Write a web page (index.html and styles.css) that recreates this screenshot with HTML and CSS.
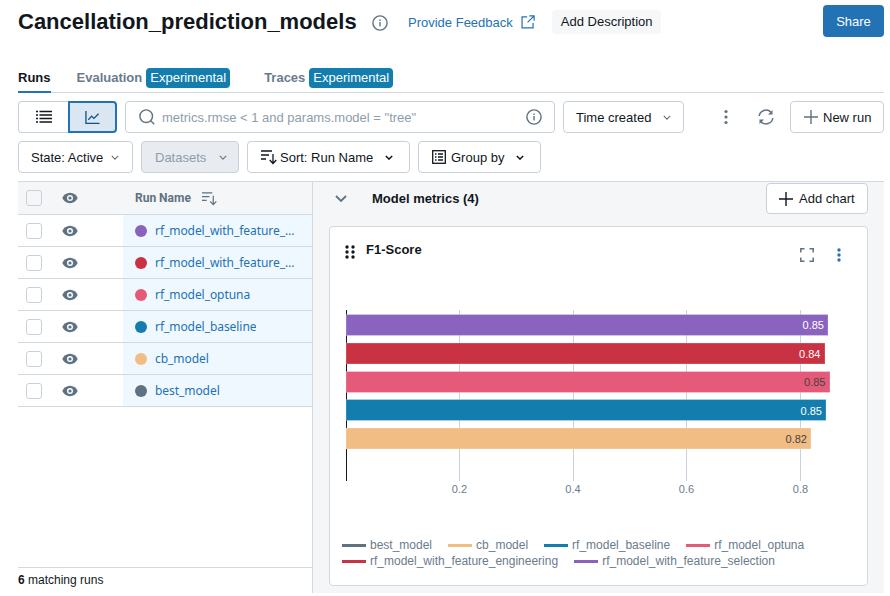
FILE: index.html
```html
<!DOCTYPE html>
<html lang="en">
<head>
<meta charset="utf-8">
<title>Cancellation_prediction_models</title>
<link rel="stylesheet" href="styles.css">
</head>
<body>
<div class="page">
  <header class="head">
    <h1 class="title">Cancellation_prediction_models</h1>
    <svg class="ico info-h" viewBox="0 0 16 16"><circle cx="8" cy="8" r="7.1" fill="none" stroke="#5f7281" stroke-width="1.4"/><rect x="7.3" y="7" width="1.4" height="4.4" fill="#5f7281"/><rect x="7.3" y="4.5" width="1.4" height="1.5" fill="#5f7281"/></svg>
    <a class="feedback">Provide Feedback</a>
    <svg class="ico ext" viewBox="0 0 16 16"><path d="M7 2.2H1.2v12.6h12.6V9" fill="none" stroke="#2272b4" stroke-width="1.4"/><path d="M9.5 1h5.5v5.5M15 1 7.5 8.5" fill="none" stroke="#2272b4" stroke-width="1.4"/></svg>
    <span class="add-desc">Add Description</span>
    <button class="share">Share</button>
  </header>

  <nav class="tabs">
    <span class="tab active">Runs</span>
    <span class="tab">Evaluation</span><span class="badge">Experimental</span>
    <span class="tab tab-traces">Traces</span><span class="badge">Experimental</span>
  </nav>

  <div class="bar bar-one">
    <div class="toggle">
      <span class="tog tog-list">
        <svg class="ico i16" viewBox="0 0 16 16"><path d="M3.5 2.5H16M3.5 6H16M3.500 9.500H16M3.500 13H16" stroke="#11171c" stroke-width="1.3"/><path d="M0 2.500H2M0 6H2M0 9.500H2M0 13H2" stroke="#11171c" stroke-width="1.3"/></svg>
      </span>
      <span class="tog tog-chart">
        <svg class="ico i15" viewBox="0 0 16 16"><path d="M1 1v13.300h14.500" fill="none" stroke="#0e538b" stroke-width="1.4"/><path d="M3.500 10.500 7 6.500l2.500 2.500 5-5" fill="none" stroke="#0e538b" stroke-width="1.4"/></svg>
      </span>
    </div>
    <div class="search">
      <svg class="ico search-i" viewBox="0 0 16 16"><circle cx="7.200" cy="7.200" r="6.300" fill="none" stroke="#5f7281" stroke-width="1.4"/><path d="m11.800 11.800 3.400 3.400" stroke="#5f7281" stroke-width="1.4"/></svg>
      <span class="placeholder">metrics.rmse &lt; 1 and params.model = "tree"</span>
      <svg class="ico search-info" viewBox="0 0 16 16"><circle cx="8" cy="8" r="7.100" fill="none" stroke="#5f7281" stroke-width="1.4"/><rect x="7.300" y="7" width="1.400" height="4.400" fill="#5f7281"/><rect x="7.300" y="4.500" width="1.400" height="1.500" fill="#5f7281"/></svg>
    </div>
    <button class="btn time">Time created<svg class="chev" viewBox="0 0 10 6"><path d="M1 1l4 4 4-4" fill="none" stroke="#5f7281" stroke-width="1.4"/></svg></button>
    <svg class="ico kebab" viewBox="0 0 4 16"><circle cx="2" cy="2.500" r="1.600" fill="#5f7281"/><circle cx="2" cy="8" r="1.600" fill="#5f7281"/><circle cx="2" cy="13.500" r="1.600" fill="#5f7281"/></svg>
    <svg class="ico refresh" viewBox="0 0 16 16"><path d="M1.200 7A6.900 6.900 0 0 1 13 3.200M14.800 9A6.900 6.900 0 0 1 3 12.800" fill="none" stroke="#5f7281" stroke-width="1.500"/><path d="M14.500 1v4.500H10zM1.500 15v-4.500H6z" fill="#5f7281"/></svg>
    <button class="btn newrun"><svg class="plus" viewBox="0 0 14 14"><path d="M7 0v14M0 7h14" stroke="#5f7281" stroke-width="1.400"/></svg>New run</button>
  </div>

  <div class="bar bar-two">
    <button class="btn state">State: Active<svg class="chev" viewBox="0 0 10 6"><path d="M1 1l4 4 4-4" fill="none" stroke="#5f7281" stroke-width="1.4"/></svg></button>
    <button class="btn datasets">Datasets<svg class="chev" viewBox="0 0 10 6"><path d="M1 1l4 4 4-4" fill="none" stroke="#6b7b8c" stroke-width="1.600"/></svg></button>
    <button class="btn sort"><svg class="ico i16 sort-i" viewBox="0 0 16 16"><path d="M0 2h11M0 6h8M0 10h5" stroke="#11171c" stroke-width="1.3"/><path d="M12 5v9.500M8.700 11l3.300 3.500 3.300-3.500" fill="none" stroke="#11171c" stroke-width="1.3"/></svg>Sort: Run Name<svg class="chev" viewBox="0 0 10 6"><path d="M1 1l4 4 4-4" fill="none" stroke="#11171c" stroke-width="1.800"/></svg></button>
    <button class="btn group"><svg class="ico i14" viewBox="0 0 14 14"><rect x=".7" y=".7" width="12.600" height="12.600" fill="none" stroke="#11171c" stroke-width="1.3"/><path d="M3 4h1.500M3 7h1.500M3 10h1.500M6 4h5M6 7h5M6 10h5" stroke="#11171c" stroke-width="1.3"/></svg>Group by<svg class="chev" viewBox="0 0 10 6"><path d="M1 1l4 4 4-4" fill="none" stroke="#11171c" stroke-width="1.800"/></svg></button>
  </div>

  <main class="main">
    <section class="runs">
      <div class="row row-head">
        <span class="check check-head"></span>
        <svg class="eye" viewBox="0 0 16 12"><path d="M8 .8C4.500.8 1.600 3 .3 6c1.300 3 4.200 5.200 7.700 5.200s6.400-2.200 7.700-5.200C14.400 3 11.500.8 8 .8z" fill="#5f7281"/><circle cx="8" cy="6" r="3" fill="#f5f6f8"/><circle cx="8" cy="6" r="1.600" fill="#5f7281"/></svg>
        <span class="name-cell name-head">Run Name<svg class="ico sort-h" viewBox="0 0 16 16"><path d="M0 2h11M0 6h8M0 10h5" stroke="#5f7281" stroke-width="1.3"/><path d="M12 5v9.500M8.700 11l3.300 3.500 3.300-3.500" fill="none" stroke="#5f7281" stroke-width="1.3"/></svg></span>
      </div>
      <div class="row">
        <span class="check"></span>
        <svg class="eye" viewBox="0 0 16 12"><path d="M8 .8C4.500.8 1.600 3 .3 6c1.300 3 4.200 5.200 7.700 5.200s6.400-2.200 7.700-5.200C14.400 3 11.500.8 8 .8z" fill="#5f7281"/><circle cx="8" cy="6" r="3" fill="#fff"/><circle cx="8" cy="6" r="1.600" fill="#5f7281"/></svg>
        <span class="name-cell"><i class="dot c-purple"></i><a class="run-link">rf_model_with_feature_selection</a></span>
      </div>
      <div class="row">
        <span class="check"></span>
        <svg class="eye" viewBox="0 0 16 12"><path d="M8 .8C4.500.8 1.600 3 .3 6c1.300 3 4.200 5.200 7.700 5.200s6.400-2.200 7.700-5.200C14.400 3 11.500.8 8 .8z" fill="#5f7281"/><circle cx="8" cy="6" r="3" fill="#fff"/><circle cx="8" cy="6" r="1.600" fill="#5f7281"/></svg>
        <span class="name-cell"><i class="dot c-red"></i><a class="run-link">rf_model_with_feature_engineering</a></span>
      </div>
      <div class="row">
        <span class="check"></span>
        <svg class="eye" viewBox="0 0 16 12"><path d="M8 .8C4.500.8 1.600 3 .3 6c1.300 3 4.200 5.200 7.700 5.200s6.400-2.200 7.700-5.200C14.400 3 11.500.8 8 .8z" fill="#5f7281"/><circle cx="8" cy="6" r="3" fill="#fff"/><circle cx="8" cy="6" r="1.600" fill="#5f7281"/></svg>
        <span class="name-cell"><i class="dot c-pink"></i><a class="run-link">rf_model_optuna</a></span>
      </div>
      <div class="row">
        <span class="check"></span>
        <svg class="eye" viewBox="0 0 16 12"><path d="M8 .8C4.500.8 1.600 3 .3 6c1.300 3 4.200 5.200 7.700 5.200s6.400-2.200 7.700-5.200C14.400 3 11.500.8 8 .8z" fill="#5f7281"/><circle cx="8" cy="6" r="3" fill="#fff"/><circle cx="8" cy="6" r="1.600" fill="#5f7281"/></svg>
        <span class="name-cell"><i class="dot c-blue"></i><a class="run-link">rf_model_baseline</a></span>
      </div>
      <div class="row">
        <span class="check"></span>
        <svg class="eye" viewBox="0 0 16 12"><path d="M8 .8C4.500.8 1.600 3 .3 6c1.300 3 4.200 5.200 7.700 5.200s6.400-2.200 7.700-5.200C14.400 3 11.500.8 8 .8z" fill="#5f7281"/><circle cx="8" cy="6" r="3" fill="#fff"/><circle cx="8" cy="6" r="1.600" fill="#5f7281"/></svg>
        <span class="name-cell"><i class="dot c-orange"></i><a class="run-link">cb_model</a></span>
      </div>
      <div class="row">
        <span class="check"></span>
        <svg class="eye" viewBox="0 0 16 12"><path d="M8 .8C4.500.8 1.600 3 .3 6c1.300 3 4.200 5.200 7.700 5.200s6.400-2.200 7.700-5.200C14.400 3 11.500.8 8 .8z" fill="#5f7281"/><circle cx="8" cy="6" r="3" fill="#fff"/><circle cx="8" cy="6" r="1.600" fill="#5f7281"/></svg>
        <span class="name-cell"><i class="dot c-gray"></i><a class="run-link">best_model</a></span>
      </div>
      <div class="runs-foot"><b>6</b> matching runs</div>
    </section>

    <section class="charts">
      <div class="section-head">
        <svg class="sec-chev" viewBox="0 0 12 8"><path d="M1 1l5 5 5-5" fill="none" stroke="#5f7281" stroke-width="1.800"/></svg>
        <span class="sec-title">Model metrics (4)</span>
        <button class="btn addchart"><svg class="plus plus-dark" viewBox="0 0 14 14"><path d="M7 0v14M0 7h14" stroke="#11171c" stroke-width="1.400"/></svg>Add chart</button>
      </div>
      <article class="card">
        <div class="card-head">
          <svg class="drag" viewBox="0 0 10 14"><circle cx="2" cy="2" r="1.700"/><circle cx="8" cy="2" r="1.700"/><circle cx="2" cy="7" r="1.700"/><circle cx="8" cy="7" r="1.700"/><circle cx="2" cy="12" r="1.700"/><circle cx="8" cy="12" r="1.700"/></svg>
          <span class="card-title">F1-Score</span>
          <svg class="full" viewBox="0 0 14 14"><path d="M.8 4.500V.8h3.700M9.500.8h3.700v3.700M13.200 9.500v3.700H9.500M4.500 13.200H.8V9.500" fill="none" stroke="#5f7281" stroke-width="1.500"/></svg>
          <svg class="card-kebab" viewBox="0 0 4 14"><circle cx="2" cy="2" r="1.700" fill="#2272b4"/><circle cx="2" cy="7" r="1.700" fill="#2272b4"/><circle cx="2" cy="12" r="1.700" fill="#2272b4"/></svg>
        </div>
        <svg class="plot" viewBox="0 0 537 210" width="537" height="210">
          <g class="grid">
            <line x1="129.500" y1="30" x2="129.500" y2="201"/>
            <line x1="243.500" y1="30" x2="243.500" y2="201"/>
            <line x1="356.500" y1="30" x2="356.500" y2="201"/>
            <line x1="470.500" y1="30" x2="470.500" y2="201"/>
          </g>
          <line class="axis" x1="16.500" y1="30" x2="16.500" y2="201"/>
          <g class="bars">
            <rect class="f-purple" x="16" y="34.500" width="482" height="21"/>
            <rect class="f-red" x="16" y="63" width="479" height="21"/>
            <rect class="f-pink" x="16" y="91.500" width="484" height="21"/>
            <rect class="f-blue" x="16" y="119.500" width="480" height="21"/>
            <rect class="f-orange" x="16" y="148" width="465" height="21"/>
          </g>
          <g class="vals">
            <text class="v-light" x="494" y="49">0.85</text>
            <text class="v-light" x="490.500" y="77.500">0.84</text>
            <text class="v-dark" x="495.500" y="106">0.85</text>
            <text class="v-light" x="492" y="134.500">0.85</text>
            <text class="v-dark" x="477" y="163">0.82</text>
          </g>
          <g class="ticks">
            <text x="129.500" y="213">0.2</text>
            <text x="243" y="213">0.4</text>
            <text x="356.500" y="213">0.6</text>
            <text x="470.500" y="213">0.8</text>
          </g>
        </svg>
        <div class="legend">
          <span class="lg"><i class="ln c-gray"></i>best_model</span>
          <span class="lg"><i class="ln c-orange"></i>cb_model</span>
          <span class="lg"><i class="ln c-blue"></i>rf_model_baseline</span>
          <span class="lg"><i class="ln c-pink"></i>rf_model_optuna</span>
          <span class="lg"><i class="ln c-red"></i>rf_model_with_feature_engineering</span>
          <span class="lg"><i class="ln c-purple"></i>rf_model_with_feature_selection</span>
        </div>
      </article>
    </section>
  </main>
</div>
</body>
</html>
```
FILE: styles.css
```css
* { box-sizing: border-box; }
html, body { margin: 0; padding: 0; background: #fff; }
body { font-family: "Liberation Sans", Arial, sans-serif; font-size: 13px; color: #11171c; overflow: hidden; }
.page { width: 890px; height: 596px; padding: 5px 6px 3px 18px; display: flex; flex-direction: column; }
.ico { display: block; flex: none; }
button { font-family: inherit; font-size: 13px; color: #11171c; margin: 0; }

.head { display: flex; align-items: flex-start; height: 32px; }
.title { margin: 1px 0 0; font-size: 22px; line-height: 32px; font-weight: 700; width: 354px; white-space: nowrap; }
.info-h { width: 16px; height: 16px; margin-top: 10px; }
.feedback { margin: 9px 0 0 20px; line-height: 17px; color: #2272b4; white-space: nowrap; }
.ext { width: 14px; height: 14px; margin: 10px 0 0 8px; }
.add-desc { margin: 5px 0 0 17px; height: 24px; line-height: 24px; padding: 0 8px 0 9px; background: #f6f7f9; border-radius: 4px; white-space: nowrap; }
.share { margin-left: auto; width: 61px; height: 32px; border: 0; border-radius: 4px; background: #2272b4; color: #fff; }

.tabs { display: flex; align-items: center; margin-top: 26px; border-bottom: 1px solid #d1d9e1; height: 30px; }
.tab { font-weight: 700; color: #6b7b8c; line-height: 29px; height: 30px; }
.tab.active { color: #11171c; margin-right: 26px; border-bottom: 2px solid #2272b4; }
.tab-traces { margin-left: 34px; }
.badge { background: #137dae; color: #fff; border-radius: 4px; height: 20px; line-height: 20px; padding: 0 4px; margin-left: 4px; white-space: nowrap; }

.bar { display: flex; align-items: center; height: 32px; }
.bar-one { margin-top: 8px; }
.bar-two { margin-top: 8px; gap: 8px; }
.toggle { display: flex; width: 99px; height: 32px; flex: none; }
.tog { display: flex; align-items: center; justify-content: center; height: 32px; }
.tog-list { width: 50px; border: 1px solid #c7d1db; border-right: 0; border-radius: 4px 0 0 4px; }
.tog-chart { width: 49px; border: 2px solid #2272b4; border-radius: 0 4px 4px 0; background: #dae6f1; padding-right: 1px; }
.i16 { width: 16px; height: 16px; }
.i15 { width: 15px; height: 15px; }
.i14 { width: 14px; height: 14px; }
.search { display: flex; align-items: center; width: 430px; height: 32px; margin-left: 8px; border: 1px solid #c7d1db; border-radius: 4px; padding: 0 12px 0 13px; flex: none; }
.search-i { width: 16px; height: 16px; }
.placeholder { color: #8e9dab; margin-left: 7px; white-space: nowrap; }
.search-info { width: 16px; height: 16px; margin-left: auto; }
.btn { display: flex; align-items: center; height: 32px; background: #fff; border: 1px solid #c7d1db; border-radius: 4px; padding: 0 0 0 12px; white-space: nowrap; flex: none; }
.chev { width: 8px; height: 5px; margin-left: 12px; display: block; }
.time { width: 121px; margin-left: 8px; }
.kebab { width: 4px; height: 16px; margin-left: 40px; }
.refresh { width: 16px; height: 16px; margin-left: 30px; }
.newrun { width: 94px; margin-left: 16px; padding-left: 13px; }
.plus { width: 14px; height: 14px; margin-right: 5px; display: block; }
.state { width: 115px; }
.state .chev { margin-left: 8px; }
.datasets { width: 98px; background: #e8ecf0; color: #8e9dab; padding-left: 13px; }
.datasets .chev { margin-left: 13px; }
.sort { width: 163px; padding-left: 13px; }
.sort-i { margin-right: 3px; }
.group { width: 123px; padding-left: 13px; }
.group .i14 { margin-right: 5px; }

.main { display: flex; flex: 1; min-height: 0; margin-top: 8px; border-top: 1px solid #d1d9e1; }
.runs { width: 295px; flex: none; display: flex; flex-direction: column; border-right: 1px solid #d1d9e1; }
.row { display: flex; align-items: center; height: 32px; border-bottom: 1px solid #d1d9e1; padding-left: 8px; flex: none; }
.row-head { height: 33px; background: #f5f6f8; }
.check { width: 16px; height: 16px; border: 1px solid #c7d1db; border-radius: 3px; background: #fff; flex: none; }
.check-head { background: #f5f6f8; }
.eye { width: 16px; height: 12px; margin-left: 20px; flex: none; display: block; }
.name-cell { display: flex; align-items: center; align-self: stretch; width: 189px; margin-left: 45px; padding-left: 12px; background: #f0f8ff; font-family: "Noto Sans", sans-serif; font-size: 12px; min-width: 0; letter-spacing: -0.06px; }
.name-head { background: none; font-family: Roboto, sans-serif; font-weight: 700; color: #5f7281; letter-spacing: 0; }
.sort-h { width: 15px; height: 15px; margin-left: 11px; }
.dot { width: 12px; height: 12px; border-radius: 50%; flex: none; margin-right: 8px; }
.run-link { color: #2272b4; overflow: hidden; text-overflow: ellipsis; white-space: nowrap; margin-right: 12px; }
.c-purple { background: #8a63bf; }
.c-red { background: #c83243; }
.c-pink { background: #e55a78; }
.c-blue { background: #137dae; }
.c-orange { background: #f1bd85; }
.c-gray { background: #5f7281; }
.runs-foot { margin-top: auto; height: 26px; border-top: 1px solid #d1d9e1; font-size: 12px; line-height: 24px; }

.charts { flex: 1; min-width: 0; background: #f5f6f8; padding: 0 16px 7px; display: flex; flex-direction: column; }
.section-head { display: flex; align-items: center; height: 33px; flex: none; }
.sec-chev { width: 12px; height: 8px; margin-left: 6px; display: block; }
.sec-title { font-weight: 700; margin-left: 25px; }
.addchart { margin-left: auto; width: 102px; height: 31px; }
.plus-dark { margin-right: 6px; }
.card { margin-top: 11px; flex: 1; min-height: 0; background: #fff; border: 1px solid #d1d9e1; border-radius: 4px; display: flex; flex-direction: column; padding: 0; }
.card-head { display: flex; align-items: flex-start; height: 53px; flex: none; padding: 16px 0 0 15px; }
.drag { width: 10px; height: 14px; fill: #11171c; display: block; flex: none; margin-top: 2px; }
.card-title { font-weight: 700; margin-left: 11px; line-height: 13px; }
.full { width: 14px; height: 14px; margin-left: auto; margin-top: 5px; display: block; }
.card-kebab { width: 4px; height: 14px; margin: 5px 26px 0 23px; display: block; }
.plot { display: block; flex: none; overflow: visible; }
.grid line { stroke: #c9d2dc; stroke-width: 1; }
.axis { stroke: #11171c; stroke-width: 1; }
.bars rect { stroke: #fff; stroke-opacity: 0.25; stroke-width: 1; }
.f-purple { fill: #8a63bf; }
.f-red { fill: #c83243; }
.f-pink { fill: #e55a78; }
.f-blue { fill: #137dae; }
.f-orange { fill: #f1bd85; }
.vals text { font-family: "Liberation Sans", sans-serif; font-size: 11px; text-anchor: end; }
.v-light { fill: #fff; }
.v-dark { fill: #444; }
.ticks text { font-family: "Liberation Sans", sans-serif; font-size: 11px; fill: #6b7b8c; text-anchor: middle; }
.legend { display: flex; flex-wrap: wrap; margin-top: 47px; padding: 0 12px; width: 525px; }
.lg { display: flex; align-items: center; height: 16px; font-size: 12px; color: #6b7b8c; margin-right: 16px; white-space: nowrap; }
.ln { width: 24px; height: 3px; margin-right: 4px; display: block; }
```
